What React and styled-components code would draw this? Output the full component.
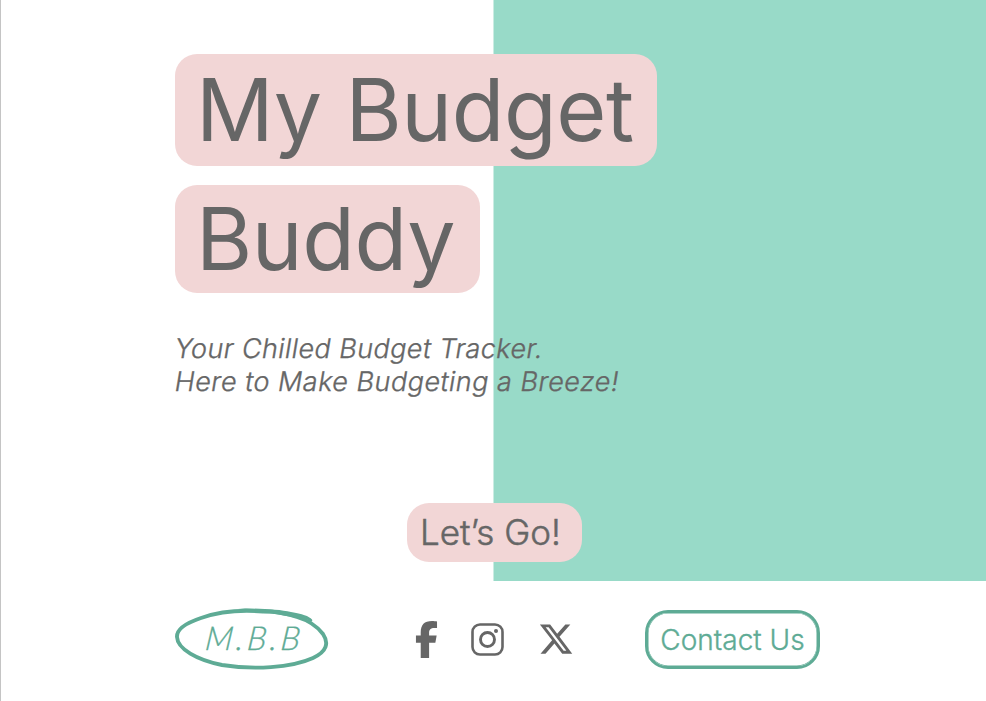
import React from "react";
import styled, { createGlobalStyle } from "styled-components";
import { FaFacebookF, FaXTwitter } from "react-icons/fa6";

const Global = createGlobalStyle`
  * { box-sizing: border-box; }
  body { margin: 0; background: #fff; font-family: Inter, sans-serif; color: #666; }
`;
const Page = styled.div`
  width: 986px;
  height: 701px;
  border-left: 1px solid #c4c4c4;
  overflow: hidden;
  display: flex;
  flex-direction: column;
`;
const Hero = styled.main`
  height: 581px;
  padding: 54px 0 0 174px;
  background: linear-gradient(90deg, #fff 492px, #cbece3 492px, #cbece3 493px, #98dac8 493px);
  display: flex;
  flex-direction: column;
  align-items: flex-start;
`;
const Title = styled.h1`
  margin: 0;
  font-weight: 400;
  font-size: 86px;
  letter-spacing: -0.4px;
  display: flex;
  flex-direction: column;
  align-items: flex-start;
`;
const Word = styled.span`
  width: ${p => p.$w}px;
  height: ${p => p.$h}px;
  margin-bottom: ${p => p.$gap}px;
  border-radius: 22px;
  background: #f2d6d6;
  padding-left: 21px;
  line-height: ${p => p.$h + 1}px;
  white-space: nowrap;
`;
const Tagline = styled.p`
  margin: 0;
  font-size: 27px;
  font-weight: 300;
  line-height: 33px;
  -webkit-text-stroke: 0.35px #666;
  white-space: nowrap;
`;
const Line = styled.span`
  display: block;
  width: max-content;
  letter-spacing: ${p => p.$spacing}px;
  transform: skewX(-9.4deg);
`;
const Go = styled.button`
  margin: 105px 0 0 232px;
  width: 175px;
  height: 59px;
  border: 0;
  border-radius: 22px;
  background: #f2d6d6;
  color: #666;
  font: 300 35px/59px Inter, sans-serif;
  -webkit-text-stroke: 0.5px #666;
  padding: 0 0 0 13px;
  text-align: left;
  white-space: nowrap;
`;
const Footer = styled.footer`
  height: 120px;
  padding: 26px 0 0 173px;
  display: flex;
  align-items: flex-start;
`;
const Logo = styled.svg`
  width: 156px;
  height: 65px;
  flex: none;
  fill: none;
  stroke: #5eab95;
  stroke-linecap: round;
  stroke-linejoin: round;
`;
const Initials = styled.text`
  fill: #5eab95;
  stroke: #5eab95;
  stroke-width: 0.3px;
  font: italic 300 33px Lato, sans-serif;
`;
const Socials = styled.nav`
  display: flex;
  align-items: center;
  margin-left: 78px;
  width: 168px;
  height: 64px;
`;
const Social = styled.a`
  display: flex;
  justify-content: center;
  width: ${p => p.$w}px;
  margin-right: ${p => p.$gap || 0}px;
`;
const Contact = styled.button`
  margin: 3px 0 0 69px;
  width: 175px;
  height: 59px;
  border: 3px solid #5eab95;
  border-radius: 23px;
  box-shadow: inset 0 0 0 0.5px #5eab95;
  background: #fff;
  color: #5eab95;
  font: 300 28px Inter, sans-serif;
  -webkit-text-stroke: 0.35px #5eab95;
  padding: 0;
  white-space: nowrap;
`;

function InstagramIcon() {
  return (
    <svg width="33" height="33" viewBox="0 0 33 33" fill="none" stroke="currentColor" strokeWidth="2.6">
      <rect x="1.500" y="1.500" width="30" height="30" rx="7.500" />
      <circle cx="16.500" cy="16.500" r="7" strokeWidth="2.900" />
      <circle cx="25" cy="8" r="2" fill="currentColor" stroke="none" />
    </svg>
  );
}

export default function App() {
  return (
    <Page>
      <Global />
      <Hero>
        <Title>
          <Word $w={482} $h={112} $gap={19}>My Budget</Word>
          <Word $w={305} $h={108} $gap={39}>Buddy</Word>
        </Title>
        <Tagline>
          <Line $spacing={0.42}>Your Chilled Budget Tracker.</Line>
          <Line $spacing={0.48}>Here to Make Budgeting a Breeze!</Line>
        </Tagline>
        <Go>Let’s Go!</Go>
      </Hero>
      <Footer>
        {/* The viewBox origin is offset to the logo's place in the page grid. */}
        <Logo viewBox="174 607 156 65">
          <path strokeWidth="3.9" d="M263 611.500C239 609.500 218 612 201 618C186 623 176.500 629 177 637C177.500 649 197 660 222 665C253 670 291 668 313 658C327 651.500 329 643 323 634C317 626 307 620 297 617C286 613 273 611.500 263 611.500" />
          <path fill="#5eab95" stroke="none" d="M238 608.300C260 608.500 279 609.500 291 612C302 614 309 616 312 619.500C313 622 311 622.500 308 620C292 617 274 613.500 260 611.500C253 610 246 609 238 608.300Z" />
          <Initials x="204" y="650.5" textLength="95" lengthAdjust="spacing" transform="translate(72 0) skewX(-6.300)">M.B.B</Initials>
        </Logo>
        <Socials>
          <Social $w={37} $gap={26}><FaFacebookF size={37} /></Social>
          <Social $w={33} $gap={34}><InstagramIcon /></Social>
          <Social $w={36}><FaXTwitter size={36} /></Social>
        </Socials>
        <Contact>Contact Us</Contact>
      </Footer>
    </Page>
  );
}
